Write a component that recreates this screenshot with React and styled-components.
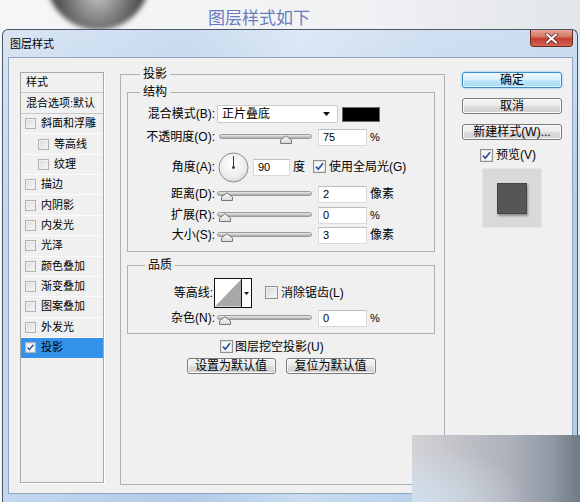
import React from "react";
import styled, { createGlobalStyle } from "styled-components";

const FONT = `"Liberation Sans", "Noto Sans CJK SC", sans-serif`;

const Global = createGlobalStyle`
  html, body { margin: 0; padding: 0; }
  body { width: 580px; height: 502px; overflow: hidden; background: #f2f3f5; font-family: ${FONT}; color: #000; }
  * { box-sizing: border-box; }
`;

const Page = styled.div`
  position: relative;
  width: 580px;
  height: 502px;
  overflow: hidden;
  background: linear-gradient(90deg, #f5f6f7 0%, #f1f2f4 60%, #e2e5e9 100%);
`;

const Ball = styled.div`
  position: absolute;
  left: 46px;
  top: -74px;
  width: 104px;
  height: 104px;
  border-radius: 50%;
  background: radial-gradient(ellipse at 50% 62%, #c9c9c9 0%, #8e8e8e 28%, #555555 55%, #3c3c3c 80%, #2e2e2e 100%);
  filter: blur(2.5px);
`;

const Heading = styled.h1`
  position: relative;
  margin: 0;
  height: 29px;
  padding: 6px 62px 0 0;
  text-align: center;
  font: 400 17px/22px "Noto Sans CJK SC", sans-serif;
  color: #6a7cbd;
`;

const Window = styled.div`
  position: relative;
  margin-left: 2px;
  width: 576px;
  height: 473px;
  border: 1px solid #4d5667;
  border-bottom: none;
  border-radius: 6px 6px 0 0;
  background:
    linear-gradient(180deg, rgba(255,255,255,0.35) 0%, rgba(255,255,255,0) 40%),
    linear-gradient(90deg, #c3d7ee 0%, #b1cae7 32%, #c9dcf0 52%, #b8cfea 75%, #b3cbe8 100%);
  display: flex;
  flex-direction: column;
`;

const TitleBar = styled.div`
  height: 27px;
  display: flex;
  align-items: flex-start;
  justify-content: space-between;
`;

const Title = styled.span`
  padding-left: 7px;
  font: 400 11px/27px "Noto Sans CJK SC", sans-serif;
  color: #000;
`;

const Close = styled.div`
  width: 43px;
  height: 17px;
  margin-right: 4px;
  border: 1px solid #6e2a22;
  border-top: none;
  border-radius: 0 0 4px 4px;
  background: linear-gradient(180deg, #e7a496 0%, #d67a6a 40%, #c23f2e 55%, #d2665a 100%);
  display: flex;
  align-items: center;
  justify-content: center;
`;

const Content = styled.div`
  height: 437px;
  margin: 0 4px 0 5px;
  border: 1px solid #8fa5bf;
  background: #f0f0f0;
  display: flex;
  align-items: flex-start;
  padding: 9px 0 0 11px;
`;

/* ---------- left list ---------- */
const List = styled.div`
  width: 84px;
  height: 411px;
  margin-top: 5px;
  border: 1px solid #a9a9a9;
  box-shadow: 1px 1px 0 #ffffff;
  background: #f0f0f0;
  font: 400 11px/1 ${FONT};
`;

const ListHead = styled.div`
  height: ${(p) => p.$h}px;
  border-bottom: 1px solid #c9c9c9;
  padding-left: 5px;
  display: flex;
  align-items: center;
  white-space: nowrap;
  overflow: hidden;
`;

const ListItem = styled.div`
  height: 20.36px;
  border-bottom: 1px solid ${(p) => (p.$selected ? "#3592ea" : "#fbfbfb")};
  background: ${(p) => (p.$selected ? "#3592ea" : "transparent")};
  display: flex;
  align-items: center;
  gap: 5px;
  padding-left: ${(p) => (p.$sub ? 17 : 4)}px;
  white-space: nowrap;
`;

/* ---------- checkbox ---------- */
const Box = styled.span`
  flex: none;
  width: ${(p) => p.$size}px;
  height: ${(p) => p.$size}px;
  border: 1px solid ${(p) => (p.$pale ? "#b2b2b2" : "#8e8f8f")};
  background: ${(p) =>
    p.$checked
      ? "linear-gradient(135deg, #f4f4f4, #ffffff)"
      : "linear-gradient(135deg, #d9d9d9 0%, #ececec 60%, #f8f8f8 100%)"};
  box-shadow: inset 0 0 0 1px ${(p) => (p.$checked ? "#e2e2e2" : "#f0f0f0")};
  display: inline-flex;
  align-items: center;
  justify-content: center;
`;

function Check({ checked, size = 13, pale }) {
  return (
    <Box $size={size} $checked={checked} $pale={pale}>
      {checked && (
        <svg width={size - 2} height={size - 2} viewBox="0 0 11 11">
          <path d="M2 5.6 L4.3 8.2 L9 2.2" fill="none" stroke="#2c4f9e" strokeWidth="1.7" />
        </svg>
      )}
    </Box>
  );
}

/* ---------- main fieldsets ---------- */
const Main = styled.fieldset`
  width: 325px;
  height: 418px;
  margin: 0 0 0 16px;
  padding: 4px 9px 0 6px;
  border: 1px solid #b0b0b0;
  min-width: 0;
`;

const Group = styled.fieldset`
  margin: ${(p) => p.$mt || 0}px 0 0 0;
  padding: 0 0 ${(p) => p.$pb}px 0;
  border: 1px solid #b0b0b0;
  min-width: 0;
`;

const Legend = styled.legend`
  margin-left: ${(p) => p.$ml}px;
  padding: 0 3px;
  font: 400 12px/14px ${FONT};
`;

const Row = styled.div`
  height: ${(p) => p.$h || 20}px;
  margin-top: ${(p) => p.$mt || 0}px;
  display: flex;
  align-items: center;
  font: 400 12px/1 ${FONT};
  white-space: nowrap;
`;

const Label = styled.span`
  flex: none;
  width: ${(p) => p.$w || 87}px;
  text-align: right;
`;

const Select = styled.div`
  margin-left: 2px;
  width: 121px;
  height: 18px;
  background: #fff;
  border: 1px solid #c9c9c9;
  border-radius: 2px;
  display: flex;
  align-items: center;
  justify-content: space-between;
  padding: 0 7px 0 4px;
`;

const Swatch = styled.div`
  margin-left: 4px;
  width: 38px;
  height: 15px;
  background: #000;
  border: 1px solid #6a6a6a;
`;

const Field = styled.div`
  margin-left: ${(p) => p.$ml}px;
  width: ${(p) => p.$w}px;
  height: 17px;
  background: #fff;
  border: 1px solid #d9d9d9;
  border-top-color: #b9bcc2;
  padding-left: 4px;
  font: 400 11px/15px ${FONT};
`;

const Unit = styled.span`
  margin-left: ${(p) => p.$ml || 3}px;
  font-size: ${(p) => (p.$small ? 11 : 12)}px;
`;

const TextAfter = styled.span`
  margin-left: ${(p) => p.$ml || 3}px;
`;

const SliderWrap = styled.div`
  position: relative;
  margin-left: ${(p) => p.$ml}px;
  width: ${(p) => p.$w}px;
  height: 14px;
  align-self: flex-start;
  margin-top: 5px;
`;

const Track = styled.div`
  margin-top: 2px;
  height: 5px;
  border-radius: 3px;
  border: 1px solid #9a9a9a;
  background: linear-gradient(180deg, #ededed 0%, #c4c4c4 60%, #a9a9a9 100%);
`;

const Thumb = styled.svg`
  position: absolute;
  top: 3px;
`;

function Slider({ value, max = 100, ml = 3, w = 94 }) {
  const pct = value / max;
  const left = 2 + pct * (w - 14);
  return (
    <SliderWrap $ml={ml} $w={w}>
      <Track />
      <Thumb width="12" height="9" viewBox="0 0 12 9" style={{ left: `${left}px` }}>
        <defs>
          <linearGradient id="tg" x1="0" y1="0" x2="0" y2="1">
            <stop offset="0" stopColor="#ffffff" />
            <stop offset="1" stopColor="#d6d6d6" />
          </linearGradient>
        </defs>
        <path d="M0.5 8.5 V5 L6 0.8 L11.5 5 V8.5 Z" fill="url(#tg)" stroke="#777" strokeWidth="1" />
      </Thumb>
    </SliderWrap>
  );
}

const DialBox = styled.svg`
  margin-left: 3px;
  flex: none;
`;

function Dial() {
  return (
    <DialBox width="31" height="31" viewBox="0 0 31 31">
      <defs>
        <radialGradient id="dg" cx="0.45" cy="0.35" r="0.7">
          <stop offset="0" stopColor="#ffffff" />
          <stop offset="0.7" stopColor="#ececec" />
          <stop offset="1" stopColor="#cfcfcf" />
        </radialGradient>
      </defs>
      <circle cx="15.5" cy="15.5" r="14.5" fill="url(#dg)" stroke="#8c8c8c" />
      <line x1="15.5" y1="15.5" x2="15.5" y2="4" stroke="#333" strokeWidth="1" />
      <circle cx="15.5" cy="15.5" r="1.4" fill="#333" />
    </DialBox>
  );
}

const ContourBox = styled.div`
  margin-left: 1px;
  width: 38px;
  height: 30px;
  border: 1px solid #111;
  background: #fff;
  display: flex;
`;

const ContourPic = styled.svg`
  flex: none;
  border-right: 1px solid #111;
`;

const ContourArrow = styled.div`
  flex: 1;
  display: flex;
  align-items: center;
  justify-content: center;
`;

const ButtonRow = styled.div`
  margin-top: 3px;
  display: flex;
  justify-content: center;
  gap: 10px;
`;

const Button = styled.div`
  width: ${(p) => p.$w || 100}px;
  height: 16px;
  border: 1px solid ${(p) => (p.$default ? "#3d8cc4" : "#7a7a7a")};
  border-radius: 3px;
  background: ${(p) =>
    p.$default
      ? "linear-gradient(180deg, #eef8fe 0%, #d9f0fc 48%, #bee6fd 52%, #a7d9f5 100%)"
      : "linear-gradient(180deg, #f4f4f4 0%, #ebebeb 48%, #dddddd 52%, #cfcfcf 100%)"};
  box-shadow: ${(p) => (p.$default ? "0 0 2px #4fb6ee, inset 0 0 0 1px #e3f4fe" : "inset 0 0 0 1px #fafafa")};
  display: flex;
  align-items: center;
  justify-content: center;
  font: 400 12px/1 ${FONT};
  white-space: nowrap;
`;

/* ---------- side ---------- */
const Side = styled.div`
  margin: 5px 0 0 17px;
  width: 100px;
  display: flex;
  flex-direction: column;
  align-items: center;
  gap: 10px;
`;

const PreviewToggle = styled.div`
  margin-top: -2px;
  margin-right: 8px;
  display: flex;
  align-items: center;
  gap: 3px;
  font: 400 12px/14px ${FONT};
`;

const PreviewBox = styled.div`
  margin-top: -4px;
  width: 60px;
  height: 60px;
  background: #d9d9d9;
  border: 1px solid #e6e6e6;
  display: flex;
  align-items: center;
  justify-content: center;
`;

const PreviewSquare = styled.div`
  width: 30px;
  height: 31px;
  background: #565656;
  border: 1px solid #454545;
  box-shadow: 1px 2px 2px rgba(0, 0, 0, 0.35);
`;

const Watermark = styled.div`
  position: absolute;
  left: 412px;
  top: 435px;
  width: 168px;
  height: 67px;
  background:
    radial-gradient(ellipse 70% 85% at 0% 100%, rgba(208, 222, 236, 1) 0%, rgba(208, 222, 236, 0) 100%),
    linear-gradient(90deg, #d3d3d6 0%, #c0c1c7 30%, #adb1bb 58%, #919aa5 82%, #707a85 100%);
`;

const styles = [
  { name: "斜面和浮雕" },
  { name: "等高线", sub: true },
  { name: "纹理", sub: true },
  { name: "描边" },
  { name: "内阴影" },
  { name: "内发光" },
  { name: "光泽" },
  { name: "颜色叠加" },
  { name: "渐变叠加" },
  { name: "图案叠加" },
  { name: "外发光" },
  { name: "投影", checked: true, selected: true },
];

const sliderRows = [
  { label: "距离(D):", value: 2, max: 100, unit: "像素", mt: 2 },
  { label: "扩展(R):", value: 0, max: 100, unit: "%", mt: 1 },
  { label: "大小(S):", value: 3, max: 100, unit: "像素", mt: 0 },
];

export default function App() {
  return (
    <Page>
      <Global />
      <Ball />
      <Heading>图层样式如下</Heading>
      <Window>
        <TitleBar>
          <Title>图层样式</Title>
          <Close>
            <svg width="13" height="11" viewBox="0 0 13 11">
              <path d="M2 1.5 L11 9.5 M11 1.5 L2 9.5" stroke="#5a1a12" strokeWidth="3.6" strokeLinecap="round" />
              <path d="M2 1.5 L11 9.5 M11 1.5 L2 9.5" stroke="#ffffff" strokeWidth="2.2" strokeLinecap="round" />
            </svg>
          </Close>
        </TitleBar>
        <Content>
          <List>
            <ListHead $h={20}>样式</ListHead>
            <ListHead $h={21}>混合选项:默认</ListHead>
            {styles.map((s) => (
              <ListItem key={s.name} $sub={s.sub} $selected={s.selected}>
                <Check size={11} checked={s.checked} pale />
                <span>{s.name}</span>
              </ListItem>
            ))}
          </List>

          <Main>
            <Legend $ml={13}>投影</Legend>
            <Group $pb={6}>
              <Legend $ml={12}>结构</Legend>
              <Row $mt={5}>
                <Label>混合模式(B):</Label>
                <Select>
                  <span>正片叠底</span>
                  <svg width="7" height="4" viewBox="0 0 7 4">
                    <path d="M0 0 H7 L3.5 4 Z" fill="#111" />
                  </svg>
                </Select>
                <Swatch />
              </Row>
              <Row $mt={3}>
                <Label>不透明度(O):</Label>
                <Slider value={75} ml={4} w={93} />
                <Field $ml={6} $w={49}>75</Field>
                <Unit $small>%</Unit>
              </Row>
              <Row $h={30} $mt={5}>
                <Label>角度(A):</Label>
                <Dial />
                <Field $ml={4} $w={37}>90</Field>
                <Unit>度</Unit>
                <TextAfter $ml={8}>
                  <Check checked />
                </TextAfter>
                <TextAfter>使用全局光(G)</TextAfter>
              </Row>
              {sliderRows.map((r) => (
                <Row key={r.label} $mt={r.mt}>
                  <Label>{r.label}</Label>
                  <Slider value={r.value} max={r.max} ml={2} w={95} />
                  <Field $ml={6} $w={49}>{r.value}</Field>
                  <Unit $small={r.unit === "%"}>{r.unit}</Unit>
                </Row>
              ))}
            </Group>

            <Group $mt={6} $pb={5}>
              <Legend $ml={17}>品质</Legend>
              <Row $h={30} $mt={6}>
                <Label $w={85}>等高线:</Label>
                <ContourBox>
                  <ContourPic width="27" height="28" viewBox="0 0 27 28">
                    <polygon points="0,28 27,0 27,28" fill="#a8a8a8" />
                  </ContourPic>
                  <ContourArrow>
                    <svg width="5" height="3" viewBox="0 0 5 3">
                      <path d="M0 0 H5 L2.5 3 Z" fill="#111" />
                    </svg>
                  </ContourArrow>
                </ContourBox>
                <TextAfter $ml={13}>
                  <Check />
                </TextAfter>
                <TextAfter $ml={3}>消除锯齿(L)</TextAfter>
              </Row>
              <Row>
                <Label>杂色(N):</Label>
                <Slider value={0} ml={2} w={95} />
                <Field $ml={6} $w={49}>0</Field>
                <Unit $small>%</Unit>
              </Row>
            </Group>

            <Row $h={16} $mt={5}>
              <TextAfter $ml={93}>
                <Check checked />
              </TextAfter>
              <TextAfter $ml={2}>图层挖空投影(U)</TextAfter>
            </Row>
            <ButtonRow>
              <Button $w={89}>设置为默认值</Button>
              <Button $w={90}>复位为默认值</Button>
            </ButtonRow>
          </Main>

          <Side>
            <Button $default>确定</Button>
            <Button>取消</Button>
            <Button>新建样式(W)...</Button>
            <PreviewToggle>
              <Check checked />
              <span>预览(V)</span>
            </PreviewToggle>
            <PreviewBox>
              <PreviewSquare />
            </PreviewBox>
          </Side>
        </Content>
      </Window>
      <Watermark />
    </Page>
  );
}
